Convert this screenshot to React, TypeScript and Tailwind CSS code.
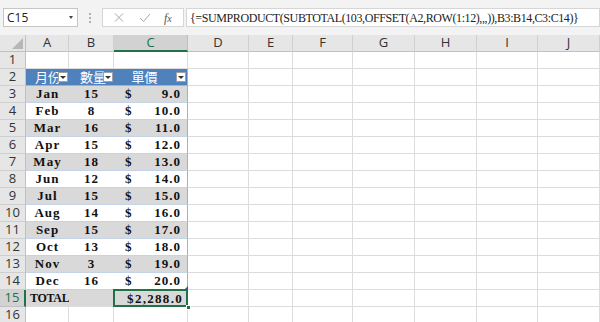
import React from "react";

const COLS = ["A", "B", "C", "D", "E", "F", "G", "H", "I", "J"];

const rows: [string, number, string][] = [
  ["Jan", 15, "9.0"],
  ["Feb", 8, "10.0"],
  ["Mar", 16, "11.0"],
  ["Apr", 15, "12.0"],
  ["May", 18, "13.0"],
  ["Jun", 12, "14.0"],
  ["Jul", 15, "15.0"],
  ["Aug", 14, "16.0"],
  ["Sep", 15, "17.0"],
  ["Oct", 13, "18.0"],
  ["Nov", 3, "19.0"],
  ["Dec", 16, "20.0"],
];

const cellFont = { fontFamily: '"Liberation Serif", "Noto Sans CJK TC", serif' };
const uiFont = { fontFamily: '"Open Sans", "Liberation Sans", sans-serif' };

const FilterBtn = () => (
  <span className="absolute right-[1px] top-[3px] flex h-[10px] w-[10px] items-center justify-center border border-[#a0a0a0] bg-white">
    <span className="h-0 w-0 border-l-[3px] border-r-[3px] border-t-[3px] border-l-transparent border-r-transparent border-t-[#333]" />
  </span>
);

const Toolbar = () => (
  <div className="flex h-[35px] items-center bg-[#f3f3f3] pl-[3px]" style={uiFont}>
    <div className="flex h-[19px] w-[75px] shrink-0 items-center justify-between border border-[#c6c6c6] bg-white pl-[3px] pr-[4px] text-[12px] text-[#222]">
      <span>C15</span>
      <span className="h-0 w-0 border-l-[2.5px] border-r-[2.5px] border-t-[3px] border-l-transparent border-r-transparent border-t-[#444]" />
    </div>
    <div className="flex w-[24px] shrink-0 flex-col items-center gap-[2px]">
      <span className="h-[2px] w-[2px] bg-[#b0b0b0]" />
      <span className="h-[2px] w-[2px] bg-[#b0b0b0]" />
      <span className="h-[2px] w-[2px] bg-[#b0b0b0]" />
    </div>
    <div className="flex h-[19px] w-[82px] shrink-0 items-center border border-[#d6d6d6] bg-white">
      <svg width="26" height="17" viewBox="0 0 26 17" className="ml-[3px]">
        <path d="M9 4.5l8 8M17 4.5l-8 8" stroke="#a8a8a8" strokeWidth="1" fill="none" />
      </svg>
      <svg width="26" height="17" viewBox="0 0 26 17">
        <path d="M8 9l3.5 3.5L18 5" stroke="#a8a8a8" strokeWidth="1" fill="none" />
      </svg>
      <span className="ml-[6px] text-[12px] italic text-[#555]" style={{ fontFamily: '"Liberation Serif", serif' }}>
        f<span className="text-[10px]">x</span>
      </span>
    </div>
    <div
      className="ml-[2px] flex h-[19px] min-w-0 flex-1 items-center overflow-hidden whitespace-nowrap border border-[#d6d6d6] bg-white pl-[3px] text-[12px] tracking-[-0.4px] text-[#222]"
      style={{ fontFamily: '"Liberation Serif", serif' }}
    >
      {"{=SUMPRODUCT(SUBTOTAL(103,OFFSET(A2,ROW(1:12),,,)),B3:B14,C3:C14)}"}
    </div>
  </div>
);

export default function App() {
  const gridLine = "border-r border-b border-[#dcdcdc]";
  const rowHead = (n: number) => (
    <div
      key={"h" + n}
      className={
        "flex items-center justify-center border-b text-[13px] " +
        (n === 15
          ? "border-r-2 border-r-[#217346] border-b-[#c0c0c0] bg-[#d2d2d2] text-[#217346]"
          : "border-r border-r-[#c0c0c0] border-b-[#cfcfcf] bg-[#e6e6e6] text-[#333]")
      }
      style={uiFont}
    >
      {n}
    </div>
  );

  const cells: React.ReactNode[] = [];

  // column header row
  cells.push(
    <div key="corner" className="relative border-b border-r border-[#c0c0c0] bg-[#e6e6e6]">
      <svg className="absolute bottom-[2px] right-[2px]" width="11" height="11" viewBox="0 0 11 11">
        <path d="M11 0V11H0Z" fill="#b7b7b7" />
      </svg>
    </div>
  );
  COLS.forEach((c) => {
    const sel = c === "C";
    cells.push(
      <div
        key={"c" + c}
        className={
          "flex items-center justify-center border-r text-[13px] " +
          (sel
            ? "border-b-2 border-b-[#217346] border-r-[#c0c0c0] bg-[#d2d2d2] text-[#217346]"
            : "border-b border-b-[#c0c0c0] border-r-[#d0d0d0] bg-[#e6e6e6] text-[#333]")
        }
        style={uiFont}
      >
        {c}
      </div>
    );
  });

  for (let r = 1; r <= 16; r++) {
    cells.push(rowHead(r));
    COLS.forEach((c, ci) => {
      const key = c + r;
      const inTable = ci < 3 && r >= 2 && r <= 15;
      if (!inTable) {
        cells.push(<div key={key} className={gridLine} />);
        return;
      }
      if (r === 2) {
        const label = ["月份", "數量", "單價"][ci];
        cells.push(
          <div
            key={key}
            className={
              "relative flex items-center border-b border-b-[#95b3d7] bg-[#4f81bd] text-[13px] text-white " +
              (ci === 0 ? "pl-[9px]" : ci === 1 ? "pl-[11px]" : "justify-center pr-[12px] border-r border-r-[#95b3d7]")
            }
            style={cellFont}
          >
            <span className="leading-none">{label}</span>
            <FilterBtn />
          </div>
        );
        return;
      }
      const band = r % 2 === 1 ? "bg-[#d9d9d9]" : "bg-white";
      const edge = ci === 2 ? " border-r border-r-[#95b3d7]" : "";
      if (r === 15) {
        if (ci === 0) {
          cells.push(
            <div key={key} className="flex items-center border-b border-b-[#dcdcdc] bg-[#d9d9d9] pl-[4px] text-[12px] font-bold tracking-[-0.3px] text-[#111]" style={cellFont}>
              TOTAL
            </div>
          );
        } else if (ci === 1) {
          cells.push(<div key={key} className="border-b border-b-[#dcdcdc] bg-[#d9d9d9]" />);
        } else {
          cells.push(
            <div key={key} className="relative flex items-center justify-end bg-[#d9d9d9] pr-[5px] text-[13px] font-bold tracking-[1.3px] text-[#111]" style={cellFont}>
              $2,288.0
              <span className="pointer-events-none absolute left-[-1px] top-[-1px] h-[18px] w-[75px] border-2 border-[#217346]" />
              <span className="absolute bottom-[-3px] right-[-3px] h-[5px] w-[5px] border border-white bg-[#217346]" />
            </div>
          );
        }
        return;
      }
      const [m, q, p] = rows[r - 3];
      if (ci === 0) {
        cells.push(
          <div key={key} className={"flex items-center justify-center border-b border-b-[#c5d3e6] text-[13px] font-bold tracking-[1px] text-[#111] " + band} style={cellFont}>
            {m}
          </div>
        );
      } else if (ci === 1) {
        cells.push(
          <div key={key} className={"flex items-center justify-center border-b border-b-[#c5d3e6] text-[13px] font-bold tracking-[1px] text-[#111] " + band} style={cellFont}>
            {q}
          </div>
        );
      } else {
        cells.push(
          <div key={key} className={"relative flex items-center justify-between border-b border-b-[#c5d3e6] pl-[11px] pr-[6px] text-[13px] font-bold tracking-[1px] text-[#111] " + band + edge} style={cellFont}>
            <span>$</span>
            <span>{p}</span>
            {r === 14 && (
              <svg className="absolute bottom-[-1px] right-[-1px]" width="4" height="4" viewBox="0 0 4 4">
                <path d="M4 0V4H0Z" fill="#2f5597" />
              </svg>
            )}
          </div>
        );
      }
    });
  }

  return (
    <div className="h-[322px] w-[600px] overflow-hidden bg-white">
      <Toolbar />
      <div className="grid auto-rows-[17px] grid-cols-[26px_43px_45px_74px_61px_44px_60px_62px_62px_61px_62px]">
        {cells}
      </div>
    </div>
  );
}
